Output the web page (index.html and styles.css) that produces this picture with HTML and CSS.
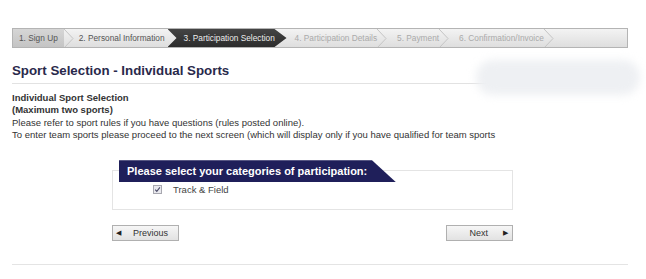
FILE: index.html
```html
<!DOCTYPE html>
<html lang="en">

<head>
    <meta charset="UTF-8">
    <title>Sport Selection</title>
    <link rel="stylesheet" href="styles.css">
</head>

<body>
    <div class="page">
        <!-- step bar -->
        <div class="steps">
            <div class="step done first">1. Sign Up</div>
            <svg class="chev" width="12" height="19" viewBox="0 0 12 19"><path d="M1 0 L10 9.5 L1 19" fill="none" stroke="#c4c4c4" stroke-width="1"/></svg>
            <div class="step done">2. Personal Information</div>
            <div class="step current">3. Participation Selection</div>
            <div class="step todo">4. Participation Details</div>
            <svg class="chev" width="12" height="19" viewBox="0 0 12 19"><path d="M1 0 L10 9.5 L1 19" fill="none" stroke="#c4c4c4" stroke-width="1"/></svg>
            <div class="step todo">5. Payment</div>
            <svg class="chev" width="12" height="19" viewBox="0 0 12 19"><path d="M1 0 L10 9.5 L1 19" fill="none" stroke="#c4c4c4" stroke-width="1"/></svg>
            <div class="step todo">6. Confirmation/Invoice</div>
            <svg class="chev" width="12" height="19" viewBox="0 0 12 19"><path d="M1 0 L10 9.5 L1 19" fill="none" stroke="#c4c4c4" stroke-width="1"/></svg>
        </div>

        <h1 class="title">Sport Selection - Individual Sports</h1>
        <div class="blur-spot"></div>

        <div class="intro">
            <b>Individual Sport Selection</b><br>
            <b>(Maximum two sports)</b><br>
            Please refer to sport rules if you have questions (rules posted online).<br>
            To enter team sports please proceed to the next screen (which will display only if you have qualified for team sports
        </div>

        <!-- categories -->
        <div class="panel">
            <div class="panel-head">Please select your categories of participation:</div>
            <div class="option">
                <svg class="check" width="9" height="9" viewBox="0 0 9 9"><rect x="0.5" y="0.5" width="8" height="8" fill="#e9e9ee" stroke="#a8a8b0"/><path d="M2.2 4.6 L3.8 6.3 L6.9 2.4" fill="none" stroke="#4a4a66" stroke-width="1.1"/></svg>
                <span class="option-label">Track &amp; Field</span>
            </div>
        </div>

        <div class="nav">
            <button class="nav-btn prev" type="button"><span class="tri">&#9664;</span>Previous</button>
            <button class="nav-btn next" type="button">Next<span class="tri">&#9654;</span></button>
        </div>

        <div class="foot-line"></div>
    </div>
</body>

</html>
```

FILE: styles.css
```css
* {
    margin: 0;
    padding: 0;
    box-sizing: border-box;
}

body {
    font-family: "Liberation Sans", Arial, sans-serif;
    background-color: #fff;
    color: #333;
}

.page {
    width: 646px;
    padding: 28px 18px 0 12px;
    position: relative;
}

/* step bar */
.steps {
    height: 20px;
    border: 1px solid #b4b4b4;
    background: linear-gradient(#f3f3f3, #dedede);
    display: flex;
    align-items: center;
    font-size: 8.3px;
    color: #666;
    overflow: hidden;
}

.step {
    height: 18px;
    line-height: 18px;
    white-space: nowrap;
}

.step.first {
    padding-left: 6px;
    padding-right: 6px;
    background: linear-gradient(#d6d6d6, #c4c4c4);
}

.step.done {
    color: #555;
}

.chev {
    flex: none;
    margin: 0 4px 0 -1px;
}

.step.current {
    width: 119px;
    margin-left: 3px;
    padding-left: 16px;
    color: #eee;
    background: linear-gradient(#444, #2c2c2c);
    clip-path: polygon(0 0, 107px 0, 119px 50%, 107px 100%, 0 100%, 9px 50%);
}

.step.todo {
    color: #aaa;
    padding-left: 5px;
}

.step.current + .step.todo {
    padding-left: 8px;
}

/* heading */
.title {
    margin-top: 14px;
    padding-bottom: 4px;
    border-bottom: 1px solid #e2e2e2;
    font-size: 13.3px;
    font-weight: bold;
    color: #29294b;
    line-height: 17px;
}

.blur-spot {
    position: absolute;
    left: 476px;
    top: 60px;
    width: 164px;
    height: 35px;
    border-radius: 17px;
    background-color: #eef0f3;
    filter: blur(4px);
}

.intro {
    margin-top: 8px;
    font-size: 9.5px;
    line-height: 12.3px;
    color: #333;
}

/* categories */
.panel {
    margin: 29px 0 0 100px;
    width: 401px;
    height: 40px;
    border: 1px solid #e4e4e4;
}

.panel-head {
    margin: -11px 0 0 6px;
    width: 277px;
    height: 22px;
    line-height: 22px;
    padding-left: 8px;
    background-color: #1f1f5a;
    color: #fff;
    font-size: 11px;
    font-weight: bold;
    clip-path: polygon(0 0, 253px 0, 277px 100%, 0 100%);
}

.option {
    display: flex;
    align-items: center;
    margin: 2px 0 0 40px;
    font-size: 9.5px;
    color: #444;
}

.option-label {
    margin-left: 11px;
}

/* buttons */
.nav {
    display: flex;
    justify-content: space-between;
    width: 401px;
    margin: 15px 0 0 100px;
}

.nav-btn {
    width: 67px;
    height: 16px;
    border: 1px solid #b0b0b0;
    background: linear-gradient(#f6f6f6, #e2e2e2);
    font-family: "Liberation Sans", Arial, sans-serif;
    font-size: 9px;
    color: #333;
    display: flex;
    align-items: center;
    cursor: pointer;
}

.prev {
    padding-left: 3px;
    gap: 12px;
}

.next {
    justify-content: flex-end;
    padding-right: 4px;
    gap: 15px;
}

.tri {
    font-size: 7px;
    color: #222;
}

.foot-line {
    margin-top: 23px;
    border-top: 1px solid #e4e4e4;
}
```
